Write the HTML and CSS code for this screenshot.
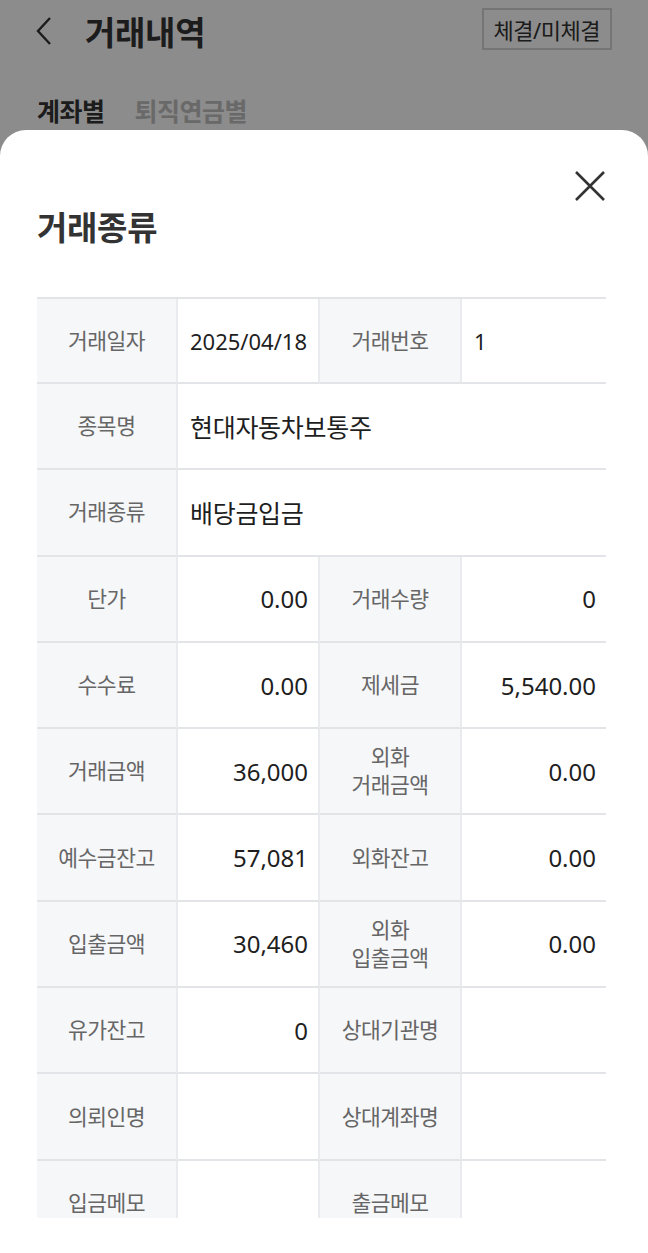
FILE: index.html
```html
<!DOCTYPE html>
<html lang="ko">
<head>
    <meta charset="UTF-8">
    <meta name="viewport" content="width=device-width, initial-scale=1.0">
    <title>거래내역</title>
    <link rel="stylesheet" href="styles.css">
</head>
<body>
    <div class="page">
        <header class="topbar">
            <button class="back" aria-label="뒤로">
                <svg width="18" height="30" viewBox="0 0 18 30"><path d="M15 2 L3 15 L15 28" fill="none" stroke="#333" stroke-width="2.4"/></svg>
            </button>
            <h1 class="page-title">거래내역</h1>
            <button class="state-btn">체결/미체결</button>
        </header>
        <nav class="tabs">
            <span class="tab active">계좌별</span>
            <span class="tab">퇴직연금별</span>
        </nav>
    </div>

    <div class="dim">
        <div class="sheet">
            <div class="sheet-head">
                <h2 class="sheet-title">거래종류</h2>
                <button class="close" aria-label="닫기">
                    <svg width="32" height="32" viewBox="0 0 32 32"><path d="M2 2 L30 30 M30 2 L2 30" stroke="#333" stroke-width="2.6"/></svg>
                </button>
            </div>
            <div class="table-wrap">
                <div class="detail">
                    <div class="th">거래일자</div>
                    <div class="td">2025/04/18</div>
                    <div class="th">거래번호</div>
                    <div class="td">1</div>

                    <div class="th">종목명</div>
                    <div class="td wide big">현대자동차보통주</div>

                    <div class="th">거래종류</div>
                    <div class="td wide big">배당금입금</div>

                    <div class="th">단가</div>
                    <div class="td num">0.00</div>
                    <div class="th">거래수량</div>
                    <div class="td num">0</div>

                    <div class="th">수수료</div>
                    <div class="td num">0.00</div>
                    <div class="th">제세금</div>
                    <div class="td num">5,540.00</div>

                    <div class="th">거래금액</div>
                    <div class="td num">36,000</div>
                    <div class="th">외화<br>거래금액</div>
                    <div class="td num">0.00</div>

                    <div class="th">예수금잔고</div>
                    <div class="td num">57,081</div>
                    <div class="th">외화잔고</div>
                    <div class="td num">0.00</div>

                    <div class="th">입출금액</div>
                    <div class="td num">30,460</div>
                    <div class="th">외화<br>입출금액</div>
                    <div class="td num">0.00</div>

                    <div class="th">유가잔고</div>
                    <div class="td num">0</div>
                    <div class="th">상대기관명</div>
                    <div class="td"></div>

                    <div class="th">의뢰인명</div>
                    <div class="td"></div>
                    <div class="th">상대계좌명</div>
                    <div class="td"></div>

                    <div class="th">입금메모</div>
                    <div class="td"></div>
                    <div class="th">출금메모</div>
                    <div class="td"></div>
                </div>
            </div>
        </div>
    </div>
</body>
</html>
```

FILE: styles.css
```css
* {
    box-sizing: border-box;
}

body {
    margin: 0;
    width: 648px;
    height: 1253px;
    overflow: hidden;
    background-color: #fff;
    font-family: "Noto Sans", "Noto Sans CJK KR", sans-serif;
    color: #222;
}

button {
    font-family: inherit;
    background: none;
    border: none;
    padding: 0;
    cursor: pointer;
}

/* page behind the sheet */
.page {
    padding: 0 37px;
}

.topbar {
    display: flex;
    align-items: center;
    height: 62px;
}

.back {
    display: flex;
    width: 50px;
    margin-left: -2px;
}

.page-title {
    margin: 0;
    font-size: 33px;
    font-weight: 700;
    color: #333;
    letter-spacing: -0.3px;
    flex: 1;
}

.state-btn {
    height: 42px;
    padding: 0 10px;
    margin-right: -1px;
    margin-top: -4px;
    border: 2px solid #d6d6d6;
    font-size: 22px;
    color: #333;
    letter-spacing: -0.5px;
}

.tabs {
    display: flex;
    gap: 30px;
    padding-top: 30px;
}

.tab {
    font-size: 25px;
    font-weight: 700;
    color: #c0c0c0;
    letter-spacing: -0.5px;
}

.tab.active {
    color: #333;
}

/* dimmed layer + bottom sheet */
.dim {
    position: fixed;
    inset: 0;
    background-color: rgba(0, 0, 0, 0.45);
    padding-top: 130px;
    display: flex;
    flex-direction: column;
}

.sheet {
    flex: 1;
    min-height: 0;
    background-color: #fff;
    border-radius: 26px 26px 0 0;
    padding: 0 42px 35px 37px;
    display: flex;
    flex-direction: column;
}

.sheet-head {
    display: flex;
    justify-content: space-between;
    align-items: flex-start;
    height: 167px;
    flex-shrink: 0;
}

.sheet-title {
    margin: 72px 0 0;
    font-size: 33px;
    font-weight: 700;
    color: #333;
    letter-spacing: -0.3px;
}

.close {
    margin-top: 40px;
    margin-right: 0;
    display: flex;
}

.table-wrap {
    flex: 1;
    min-height: 0;
    overflow: hidden;
}

.detail {
    display: grid;
    grid-template-columns: 141px 142px 142px 1fr;
    grid-template-rows: 85px;
    grid-auto-rows: 86.3px;
    border-top: 2px solid #e2e4e7;
}

.th,
.td {
    display: flex;
    align-items: center;
    border-bottom: 2px solid #e2e4e7;
    border-right: 2px solid #e9ebee;
}

.th {
    justify-content: center;
    text-align: center;
    background-color: #f6f7f9;
    font-size: 21.5px;
    line-height: 28px;
    color: #666;
    letter-spacing: -0.5px;
}

.td {
    padding: 0 10px 0 12px;
    font-size: 22px;
    color: #1e1e1e;
}

.td:nth-child(4n),
.td.wide {
    border-right: none;
}

.td.wide {
    grid-column: span 3;
}

.td.big {
    font-size: 25px;
    letter-spacing: -0.3px;
}

.td.num {
    justify-content: flex-end;
    font-size: 24px;
}
```
